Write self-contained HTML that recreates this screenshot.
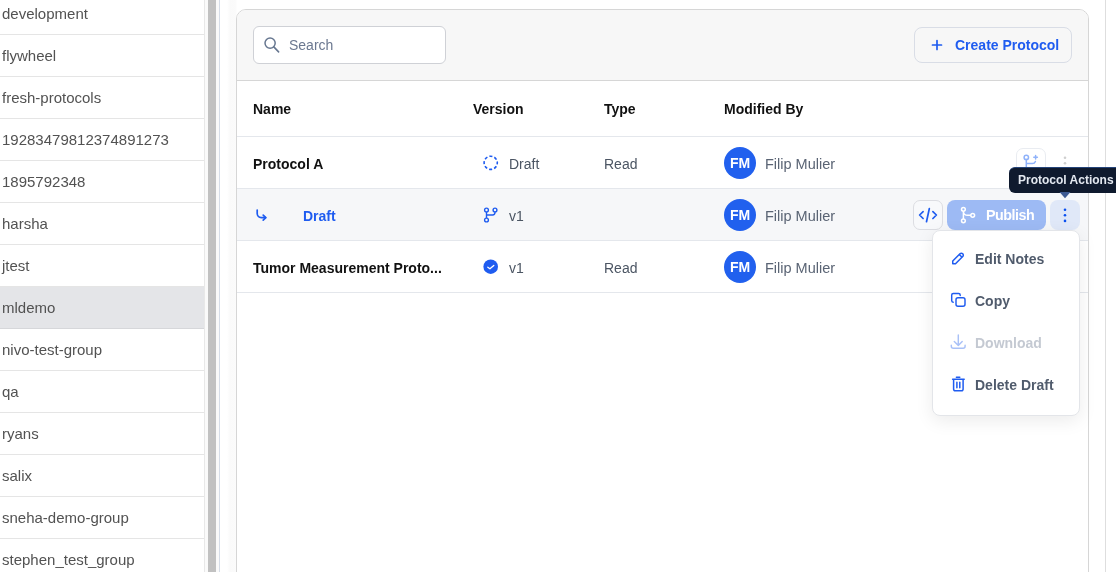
<!DOCTYPE html>
<html><head><meta charset="utf-8">
<style>
*{box-sizing:border-box;margin:0;padding:0}
html,body{width:1116px;height:572px;overflow:hidden;background:#fff;font-family:"Liberation Sans",sans-serif}
.txt,.si,.av{will-change:transform}
.abs{position:absolute}
#side{position:absolute;left:0;top:0;width:204px;height:572px;background:#fff}
.si{position:absolute;left:0;width:204px;height:42px;border-bottom:1px solid #e5e5e5;font-size:15px;color:#525252;line-height:41px;padding-left:2px;white-space:nowrap}
.si.sel{background:#e4e5e8;border-bottom-color:#d6d7da}
#track{position:absolute;left:204px;top:0;width:15px;height:572px;background:#fafafa;border-left:1px solid #e8e8e8}
#thumb{position:absolute;left:208px;top:0;width:8px;height:572px;background:#c1c1c1}
#mainline{position:absolute;left:219px;top:0;width:1px;height:572px;background:#d6dde8}
#main{position:absolute;left:220px;top:0;width:896px;height:572px;background:linear-gradient(to right,#fff 0,#fff 7px,#fafafa 10px,#fbfbfb 16px,#fff 17px)}
#card{position:absolute;left:236px;top:9px;width:853px;height:600px;border:1px solid #d6d6d6;border-radius:10px;background:#fff}
#chead{position:absolute;left:237px;top:10px;width:851px;height:71px;background:#f7f7f7;border-bottom:1px solid #d6d6d6;border-radius:9px 9px 0 0}
.av{width:32px;height:32px;border-radius:50%;background:#2160ee;color:#fff;font-size:14px;font-weight:700;line-height:32px;text-align:center}
.nm{font-size:14.5px;line-height:16px;color:#5a6474}
.mi{font-size:14px;font-weight:700;line-height:16px;color:#505b6c}
.txt{position:absolute;white-space:nowrap}
.th{font-size:14px;font-weight:700;color:#111}
.row{position:absolute;left:0;width:851px;height:52px;border-bottom:1px solid #e4e7ec}
</style></head><body>
<div id="side">
  <div class="si" style="top:-7px">development</div>
  <div class="si" style="top:35px">flywheel</div>
  <div class="si" style="top:77px">fresh-protocols</div>
  <div class="si" style="top:119px">19283479812374891273</div>
  <div class="si" style="top:161px">1895792348</div>
  <div class="si" style="top:203px">harsha</div>
  <div class="si" style="top:245px">jtest</div>
  <div class="si sel" style="top:287px">mldemo</div>
  <div class="si" style="top:329px">nivo-test-group</div>
  <div class="si" style="top:371px">qa</div>
  <div class="si" style="top:413px">ryans</div>
  <div class="si" style="top:455px">salix</div>
  <div class="si" style="top:497px">sneha-demo-group</div>
  <div class="si" style="top:539px">stephen_test_group</div>
</div>
<div id="track"></div>
<div id="thumb"></div>
<div id="mainline"></div>
<div id="main"></div>
<div id="card"></div>
<div class="abs" style="left:1089px;top:0;width:27px;height:572px;background:#fff"></div>
<div class="abs" style="left:1105px;top:0;width:1px;height:572px;background:#dedede"></div>
<div id="chead"></div>
<!-- search -->
<div class="abs" style="left:253px;top:26px;width:193px;height:38px;border:1px solid #cfd1d6;border-radius:6px;background:#fff"></div>
<svg class="abs" style="left:262px;top:36px" width="20" height="20" viewBox="0 0 20 20"><circle cx="8.1" cy="7.1" r="5.1" fill="none" stroke="#677790" stroke-width="1.5"/><path d="M11.8 10.9 L16.6 15.9" stroke="#677790" stroke-width="1.6" stroke-linecap="round"/></svg>
<div class="txt" style="left:289px;top:37px;font-size:14px;line-height:16px;color:#6b7890">Search</div>
<!-- create -->
<div class="abs" style="left:914px;top:27px;width:158px;height:36px;border:1px solid #d9dde6;border-radius:8px"></div>
<svg class="abs" style="left:929px;top:37px" width="16" height="16" viewBox="0 0 16 16"><path d="M8 3.5V12.5M3.5 8H12.5" stroke="#1f5cf0" stroke-width="1.7" stroke-linecap="round"/></svg>
<div class="txt" style="left:955px;top:37px;font-size:14px;font-weight:700;line-height:16px;color:#1f5cf0">Create Protocol</div>
<!-- table header -->
<div class="txt th" style="left:253px;top:101px;line-height:16px">Name</div>
<div class="txt th" style="left:473px;top:101px;line-height:16px">Version</div>
<div class="txt th" style="left:604px;top:101px;line-height:16px">Type</div>
<div class="txt th" style="left:724px;top:101px;line-height:16px">Modified By</div>
<div class="abs" style="left:237px;top:136px;width:851px;height:1px;background:#e4e7ec"></div>
<!-- row 1 -->
<div class="txt th" style="left:253px;top:156px;line-height:16px">Protocol A</div>
<svg class="abs" style="left:482px;top:155px" width="17" height="17" viewBox="0 0 17 17"><circle cx="8.7" cy="7.8" r="6.6" fill="none" stroke="#1f5cf0" stroke-width="1.6" stroke-dasharray="3.1 2.08" stroke-dashoffset="1.55"/></svg>
<div class="txt" style="left:509px;top:156px;font-size:14px;line-height:16px;color:#4b5563">Draft</div>
<div class="txt" style="left:604px;top:156px;font-size:14px;line-height:16px;color:#4b5563">Read</div>
<div class="abs av" style="left:724px;top:147px">FM</div>
<div class="txt nm" style="left:765px;top:156px">Filip Mulier</div>
<div class="abs" style="left:1016px;top:148px;width:30px;height:30px;border:1px solid #e9ecf1;border-radius:7px;background:#fff"></div>
<svg class="abs" style="left:1021px;top:151px" width="20" height="20" viewBox="0 0 20 20"><circle cx="5.3" cy="6.4" r="2.2" fill="none" stroke="#8fb2fa" stroke-width="1.5"/><path d="M5.3 8.6V17M5.3 12.5H11.4A3.2 3.2 0 0 0 14.4 10.4" fill="none" stroke="#8fb2fa" stroke-width="1.5" stroke-linecap="round"/><path d="M14.6 4.4V8M12.8 6.2H16.4" stroke="#8fb2fa" stroke-width="1.5" stroke-linecap="round"/></svg>
<svg class="abs" style="left:1059px;top:151px" width="12" height="24" viewBox="0 0 12 24"><circle cx="6" cy="6.8" r="1.3" fill="#cfcfcf"/><circle cx="6" cy="12.2" r="1.3" fill="#cfcfcf"/><circle cx="6" cy="17.6" r="1.3" fill="#cfcfcf"/></svg>
<div class="abs" style="left:237px;top:188px;width:851px;height:1px;background:#e4e7ec"></div>
<!-- row 2 -->
<div class="abs" style="left:237px;top:189px;width:851px;height:51px;background:#f6f7f9"></div>
<svg class="abs" style="left:252px;top:205px" width="20" height="20" viewBox="0 0 20 20"><path d="M5.2 5V8.6A4 4 0 0 0 9.2 12.6H13.6" fill="none" stroke="#1f5cf0" stroke-width="1.7" stroke-linecap="round"/><path d="M11.2 10.1 L13.8 12.6 L11.2 15.1" fill="none" stroke="#1f5cf0" stroke-width="1.7" stroke-linecap="round" stroke-linejoin="round"/></svg>
<div class="txt th" style="left:303px;top:208px;line-height:16px;color:#1f5cf0">Draft</div>
<svg class="abs" style="left:481px;top:205px" width="20" height="20" viewBox="0 0 20 20"><circle cx="5.5" cy="5" r="1.9" fill="none" stroke="#1f5cf0" stroke-width="1.4"/><circle cx="14" cy="5" r="1.9" fill="none" stroke="#1f5cf0" stroke-width="1.4"/><circle cx="5.5" cy="15" r="1.9" fill="none" stroke="#1f5cf0" stroke-width="1.4"/><path d="M5.5 6.9V13.1M5.5 10H11.6A2.4 2.4 0 0 0 14 7.6V6.9" fill="none" stroke="#1f5cf0" stroke-width="1.4"/></svg>
<div class="txt" style="left:509px;top:208px;font-size:14px;line-height:16px;color:#4b5563">v1</div>
<div class="abs av" style="left:724px;top:199px">FM</div>
<div class="txt nm" style="left:765px;top:208px">Filip Mulier</div>
<div class="abs" style="left:913px;top:200px;width:30px;height:30px;border:1px solid #dcdde2;border-radius:7px;background:#f8f9fb"></div>
<svg class="abs" style="left:913px;top:200px" width="30" height="30" viewBox="0 0 30 30"><path d="M10.1 11.6L6.6 15L10.1 18.5M19.9 11.6L23.4 15L19.9 18.5M16.3 8.7L13.5 21.7" fill="none" stroke="#1f5cf0" stroke-width="1.7" stroke-linecap="round" stroke-linejoin="round"/></svg>
<div class="abs" style="left:947px;top:200px;width:99px;height:30px;border-radius:8px;background:#9dbaf4"></div>
<svg class="abs" style="left:955px;top:203px" width="24" height="24" viewBox="0 0 24 24"><circle cx="8.4" cy="6.3" r="1.9" fill="none" stroke="#fff" stroke-width="1.5"/><circle cx="8.4" cy="17.8" r="1.9" fill="none" stroke="#fff" stroke-width="1.5"/><circle cx="17.7" cy="12.3" r="1.9" fill="none" stroke="#fff" stroke-width="1.5"/><path d="M8.4 8.2V15.9M8.4 8.2A4.1 4.1 0 0 0 12.5 12.3H15.8" fill="none" stroke="#fff" stroke-width="1.5"/></svg>
<div class="txt" style="left:985.5px;top:207px;font-size:14.3px;font-weight:700;line-height:16px;letter-spacing:-0.5px;color:#fff">Publish</div>
<div class="abs" style="left:1050px;top:200px;width:30px;height:30px;border-radius:8px;background:#e0e8f8"></div>
<svg class="abs" style="left:1059px;top:203px" width="12" height="24" viewBox="0 0 12 24"><circle cx="6" cy="6.7" r="1.3" fill="#0a50f0"/><circle cx="6" cy="12.3" r="1.3" fill="#0a50f0"/><circle cx="6" cy="17.9" r="1.3" fill="#0a50f0"/></svg>
<div class="abs" style="left:237px;top:240px;width:851px;height:1px;background:#e4e7ec"></div>
<!-- row 3 -->
<div class="txt th" style="left:253px;top:260px;line-height:16px">Tumor Measurement Proto...</div>
<svg class="abs" style="left:482px;top:258px" width="17" height="17" viewBox="0 0 17 17"><circle cx="8.7" cy="8.7" r="7.3" fill="#1f5cf0"/><path d="M5.8 9.2L7.9 10.8L11.8 7.4" fill="none" stroke="#fff" stroke-width="1.3" stroke-linecap="round" stroke-linejoin="round"/></svg>
<div class="txt" style="left:509px;top:260px;font-size:14px;line-height:16px;color:#4b5563">v1</div>
<div class="txt" style="left:604px;top:260px;font-size:14px;line-height:16px;color:#4b5563">Read</div>
<div class="abs av" style="left:724px;top:251px">FM</div>
<div class="txt nm" style="left:765px;top:260px">Filip Mulier</div>
<div class="abs" style="left:237px;top:292px;width:851px;height:1px;background:#e4e7ec"></div>
<!-- tooltip -->
<div class="abs" style="left:1009px;top:167px;width:120px;height:26px;border-radius:6px;background:#0f1a2e;border-top:1px solid #24447a"></div>
<svg class="abs" style="left:1059px;top:192px" width="12" height="7" viewBox="0 0 12 7"><path d="M0.5 0L6 6.3L11.5 0Z" fill="#3d5a92"/></svg>
<div class="txt" style="left:1018px;top:172px;font-size:12px;font-weight:700;line-height:16px;color:#e3e8f0">Protocol Actions</div>
<!-- dropdown -->
<div class="abs" style="left:932px;top:230px;width:148px;height:186px;border:1px solid #e3e5e9;border-radius:8px;background:#fff;box-shadow:0 5px 18px rgba(0,0,0,0.08)"></div>
<svg class="abs" style="left:949.9px;top:249.5px" width="16.5" height="16.5" viewBox="0 0 24 24"><path d="M4 20h4l10.5-10.5a2.828 2.828 0 1 0-4-4L4 16v4M13.5 6.5l4 4" fill="none" stroke="#1f5cf0" stroke-width="2.2" stroke-linejoin="round" stroke-linecap="round"/></svg>
<div class="txt mi" style="left:975px;top:251px">Edit Notes</div>
<svg class="abs" style="left:948px;top:290px" width="20" height="20" viewBox="0 0 20 20"><rect x="8" y="7.7" width="9" height="8.6" rx="2" fill="none" stroke="#1f5cf0" stroke-width="1.45"/><path d="M5.2 12.2A1.6 1.6 0 0 1 3.7 10.6V5.1A1.6 1.6 0 0 1 5.3 3.5H10.6A1.6 1.6 0 0 1 12.2 5.1V5.4" fill="none" stroke="#1f5cf0" stroke-width="1.45" stroke-linecap="round"/></svg>
<div class="txt mi" style="left:975px;top:293px">Copy</div>
<svg class="abs" style="left:948px;top:332px" width="20" height="20" viewBox="0 0 20 20"><path d="M10.3 3V13.4M6.3 9.6L10.3 13.6L14.2 9.6M3.3 13.3V14.3A2 2 0 0 0 5.3 16.3H15.1A2 2 0 0 0 17.1 14.3V13.3" fill="none" stroke="#a9c1f7" stroke-width="1.45" stroke-linecap="round" stroke-linejoin="round"/></svg>
<div class="txt mi" style="left:975px;top:335px;color:#c4c9d2">Download</div>
<svg class="abs" style="left:948px;top:374px" width="20" height="20" viewBox="0 0 20 20"><path d="M4.6 5.3H16.2M8.4 3.3H11.8M5.6 5.3V15.3A1.5 1.5 0 0 0 7.1 16.8H13.6A1.5 1.5 0 0 0 15.1 15.3V5.3M8.9 8.3V13.8M11.8 8.3V13.8" fill="none" stroke="#1f5cf0" stroke-width="1.5" stroke-linecap="round" stroke-linejoin="round"/></svg>
<div class="txt mi" style="left:975px;top:377px">Delete Draft</div>
</body></html>
